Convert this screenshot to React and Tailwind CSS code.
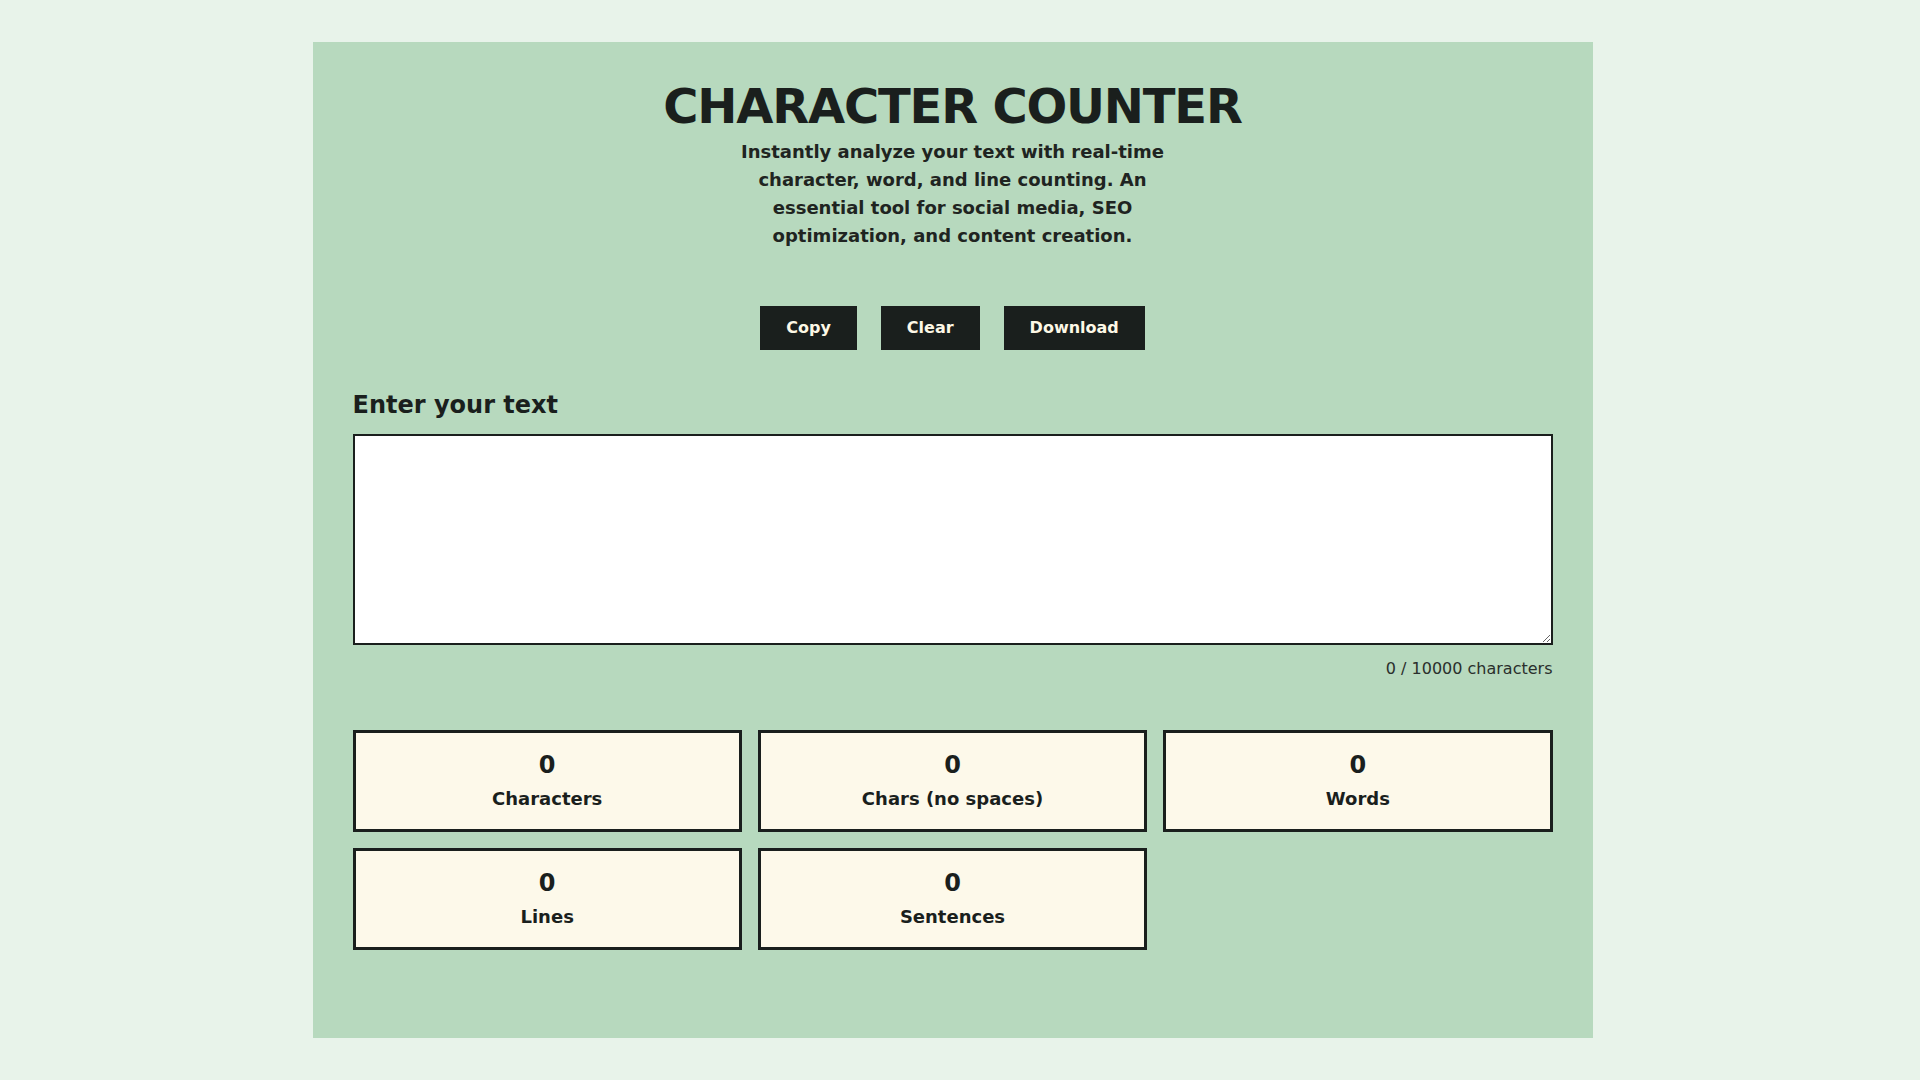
import React, { useState } from "react";

export default function App() {
  const [text, setText] = useState("");
  const chars = text.length;
  const noSpaces = text.replace(/\s/g, "").length;
  const words = text.trim() ? text.trim().split(/\s+/).length : 0;
  const lines = text ? text.split("\n").length : 0;
  const sentences = (text.match(/[^.!?]+[.!?]+/g) || []).length;

  const stats = [
    [chars, "Characters"],
    [noSpaces, "Chars (no spaces)"],
    [words, "Words"],
    [lines, "Lines"],
    [sentences, "Sentences"],
  ];

  return (
    <div
      className="min-h-screen bg-[#e8f3ea] pr-[15px] text-[#1a1f1d]"
      style={{ fontFamily: '"DejaVu Sans", Verdana, sans-serif' }}
    >
      <div className="pt-[42px] pb-32">
        <main className="mx-auto max-w-[1280px] bg-[#b7d9be] p-10 pb-[88px]">
          <header className="flex flex-col items-center text-center">
            <h1 className="text-5xl leading-none font-bold tracking-tight">CHARACTER COUNTER</h1>
            <p className="mt-2 max-w-md text-lg leading-7 font-bold text-[#1f2421]">
              Instantly analyze your text with real-time character, word, and line counting. An
              essential tool for social media, SEO optimization, and content creation.
            </p>
          </header>

          <div className="mt-14 flex justify-center gap-6">
            {["Copy", "Clear", "Download"].map((b) => (
              <button
                key={b}
                className="h-11 bg-[#1a1f1d] px-[26px] text-base font-bold text-[#fdf8e6]"
              >
                {b}
              </button>
            ))}
          </div>

          <section className="mt-[39px]">
            <label className="block text-2xl leading-8 font-bold">Enter your text</label>
            <textarea
              value={text}
              onChange={(e) => setText(e.target.value)}
              maxLength={10000}
              className="mt-[13px] block h-[211px] w-full border-2 border-[#1a1f1d] bg-white p-3 text-base outline-none"
            />
            <div className="mt-3 text-right text-base leading-6 text-[#2a2f2c]">
              {chars} / 10000 characters
            </div>
          </section>

          <section className="mt-[49px] grid grid-cols-3 gap-4">
            {stats.map(([n, label]) => (
              <div
                key={label}
                className="flex flex-col items-center border-[3px] border-[#1a1f1d] bg-[#fdf9ea] px-4 py-4"
              >
                <div className="text-2xl leading-8 font-bold">{n}</div>
                <div className="mt-1 text-lg leading-7 font-bold">{label}</div>
              </div>
            ))}
          </section>
        </main>
      </div>
    </div>
  );
}
